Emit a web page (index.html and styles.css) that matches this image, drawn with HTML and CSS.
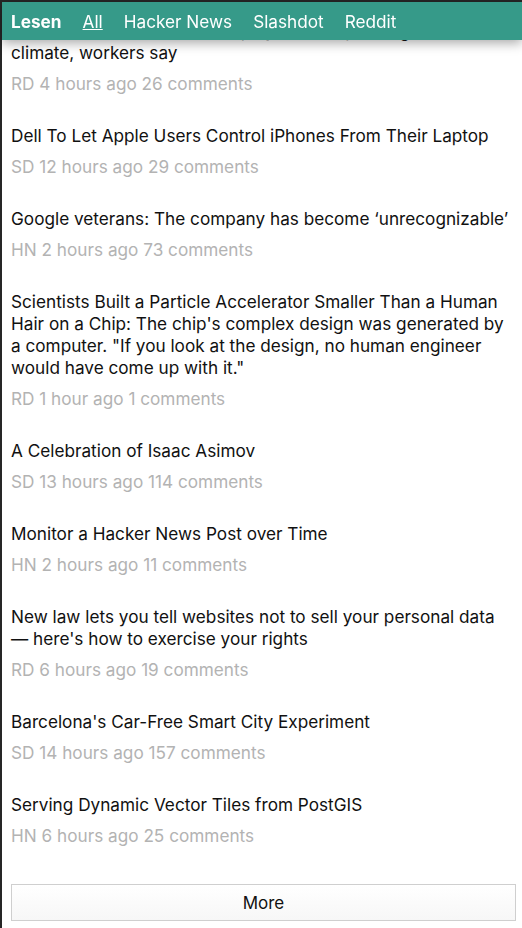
FILE: index.html
```html
<!DOCTYPE html>
<html lang="en">
<head>
<meta charset="utf-8">
<title>Lesen</title>
<link rel="stylesheet" href="styles.css">
</head>
<body>
<header class="topbar">
  <span class="brand">Lesen</span>
  <a class="nav-link active" href="#">All</a>
  <a class="nav-link" href="#">Hacker News</a>
  <a class="nav-link" href="#">Slashdot</a>
  <a class="nav-link" href="#">Reddit</a>
</header>
<main class="feed">
  <article class="item">
    <div class="title">Amazon threatens to fire employees for speaking out about climate, workers say</div>
    <div class="meta">RD 4 hours ago 26 comments</div>
  </article>
  <article class="item">
    <div class="title">Dell To Let Apple Users Control iPhones From Their Laptop</div>
    <div class="meta">SD 12 hours ago 29 comments</div>
  </article>
  <article class="item">
    <div class="title">Google veterans: The company has become ‘unrecognizable’</div>
    <div class="meta">HN 2 hours ago 73 comments</div>
  </article>
  <article class="item">
    <div class="title">Scientists Built a Particle Accelerator Smaller Than a Human Hair on a Chip: The chip's complex design was generated by a computer. "If you look at the design, no human engineer would have come up with it."</div>
    <div class="meta">RD 1 hour ago 1 comments</div>
  </article>
  <article class="item">
    <div class="title">A Celebration of Isaac Asimov</div>
    <div class="meta">SD 13 hours ago 114 comments</div>
  </article>
  <article class="item">
    <div class="title">Monitor a Hacker News Post over Time</div>
    <div class="meta">HN 2 hours ago 11 comments</div>
  </article>
  <article class="item">
    <div class="title">New law lets you tell websites not to sell your personal data — here's how to exercise your rights</div>
    <div class="meta">RD 6 hours ago 19 comments</div>
  </article>
  <article class="item">
    <div class="title">Barcelona's Car-Free Smart City Experiment</div>
    <div class="meta">SD 14 hours ago 157 comments</div>
  </article>
  <article class="item">
    <div class="title">Serving Dynamic Vector Tiles from PostGIS</div>
    <div class="meta">HN 6 hours ago 25 comments</div>
  </article>
  <div class="more-wrap">
    <button class="more" type="button">More</button>
  </div>
</main>
</body>
</html>
```
FILE: styles.css
```css
html, body {
  margin: 0;
  padding: 0;
}
body {
  background: #fff;
  border-top: 2px solid #262626;
  border-left: 2px solid #262626;
  font-family: Inter, "Liberation Sans", Arial, sans-serif;
  font-size: 17.2px;
  color: #111;
  min-height: 926px;
  box-sizing: border-box;
  overflow: hidden;
}
.topbar {
  position: fixed;
  top: 2px;
  left: 2px;
  right: 0;
  height: 38px;
  background: #369a89;
  display: flex;
  align-items: center;
  gap: 21px;
  padding-left: 9px;
  box-shadow: 0 3px 12px rgba(0, 0, 0, 0.35);
  z-index: 2;
  color: #fff;
  font-size: 17.2px;
}
.brand {
  font-weight: bold;
}
.nav-link {
  color: #fff;
  text-decoration: none;
}
.nav-link.active {
  text-decoration: underline;
}
.feed {
  padding: 18px 6px 0 9px;
}
.item {
  margin-bottom: 31px;
}
.title {
  line-height: 22px;
}
.meta {
  margin-top: 10px;
  line-height: 20px;
  color: #b3b3b3;
}
.more-wrap {
  padding-top: 7px;
  padding-bottom: 7px;
}
.more {
  display: block;
  width: 100%;
  height: 37px;
  border: 1px solid #cfcfcf;
  background: linear-gradient(#ffffff, #f7f7f7);
  font-family: inherit;
  font-size: 17px;
  color: #111;
  border-radius: 0;
}
```
